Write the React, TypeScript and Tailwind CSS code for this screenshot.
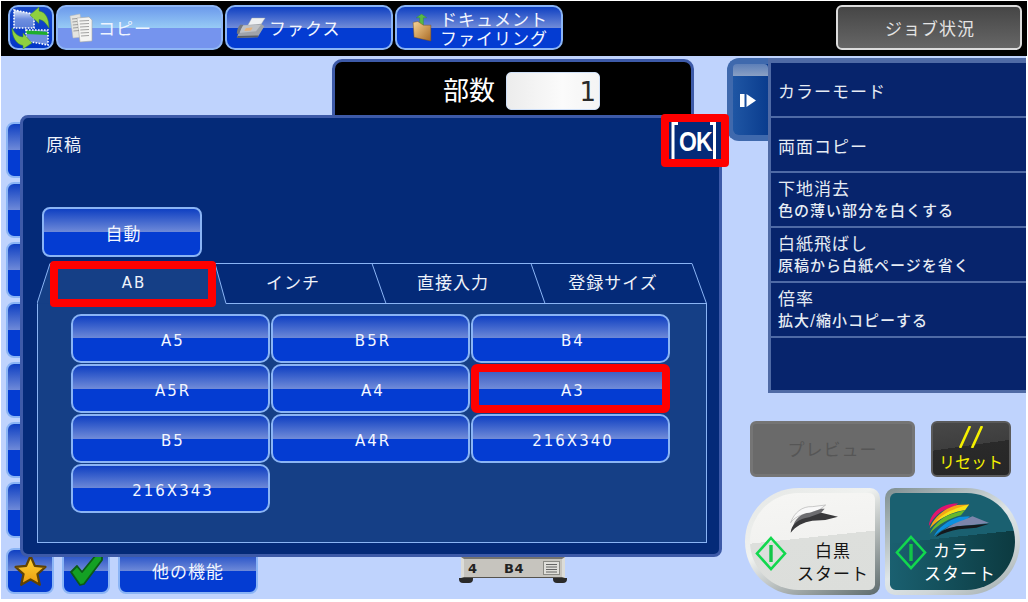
import React from "react";

const gloss =
  "bg-[linear-gradient(#0f40c2_0%,#6f8ad8_50%,#043cd2_50%,#043cd2_100%)] border-2 border-[#8ab4f5] text-[#f2f6ff]";
const jp = "text-[17px] tracking-[1px] leading-none";
const jpc = "text-[17px] tracking-[1px] leading-none pt-[4px]";
const latin = "text-[15px] tracking-[2px] leading-none";
const sub = "text-[15px] font-medium leading-none tracking-[1px]";
const row = "flex h-[53px] items-center bg-[#07246c] pl-[7px]";
const row2 = "flex h-[53px] flex-col justify-center gap-[6px] bg-[#07246c] pl-[7px] pt-[1px]";

function Side() {
  return <div className={`${gloss} h-[56px] w-[40px] rounded-[8px]`} />;
}

function SwapIcon() {
  return (
    <svg width="42" height="42" viewBox="0 0 42 42">
      <defs>
        <linearGradient id="fr" x1="0" y1="0" x2="0" y2="1">
          <stop offset="0" stopColor="#dfe9fb" />
          <stop offset="0.5" stopColor="#6f8fe0" />
          <stop offset="1" stopColor="#5a7ed8" />
        </linearGradient>
      </defs>
      <path d="M4 3 L24 7 L24 21 L4 21 Z" fill="url(#fr)" />
      <path d="M4 3 L24 7 L24 21 L4 21 Z" fill="none" stroke="#fff" strokeWidth="1.6" strokeDasharray="1.6 1.4" />
      <path d="M16 23 H38 V38 L16 34 Z" fill="#6d8ee0" />
      <path d="M16 23 L38 25 L38 28 L16 27 Z" fill="#1fae2c" />
      <path d="M16 23 H38 V38 L16 34 Z" fill="none" stroke="#fff" strokeWidth="1.6" strokeDasharray="1.6 1.4" />
      <path d="M20 8 L29 0 L29 4 C36 5 39 12 39 21 C36 16 33 13 29 12.5 L29 16.5 Z" fill="#8fd040" stroke="#3f8f2a" strokeWidth="0.5" />
      <path d="M22 36 L13 42 L13 38.5 C6 37 2 30 2 21 C5 27 8 29.5 13 30 L13 26 Z" fill="#8fd040" stroke="#3f8f2a" strokeWidth="0.5" />
    </svg>
  );
}

function CopyIcon() {
  return (
    <svg width="24" height="30" viewBox="0 0 24 30">
      <path d="M1 3 L11 1 L14 24 L4 25 Z" fill="#e4e4e0" stroke="#b8b8b4" strokeWidth="0.5" />
      <path d="M8 5 L20 4 L23 7 L23 28 L11 29 Z" fill="#f4f4f2" stroke="#a8a8a4" strokeWidth="0.6" />
      <g stroke="#8b8b8b" strokeWidth="0.8">
        <path d="M3 6 L8 5.5 M3.4 9 L8 8.5 M3.8 12 L9 11.5 M4 15 L9 14.5 M4.4 18 L10 17.5" />
        <path d="M10.5 8 L20 7.5 M10.8 11 L20 10.5 M11 14 L20 13.5 M11.3 17 L20 16.5 M11.6 20 L20 19.5 M12 23 L20 22.5" />
      </g>
    </svg>
  );
}

function FaxIcon() {
  return (
    <svg width="30" height="22" viewBox="0 0 36 26" className="shrink-0">
      <path d="M14 10 L19 1 L35 1 L28 12 Z" fill="#eef0f2" stroke="#9aa0a8" strokeWidth="0.5" />
      <path d="M6 10 L30 8 L34 11 L26 24 L1 25 Z" fill="#a0a4aa" />
      <path d="M8 10 L30 9 L24 17 L3 19 Z" fill="#bfc2c6" />
      <path d="M12 13 L20 12.5 L18 16 L10 16.5 Z" fill="#e6b27a" />
      <path d="M1 25 L26 24 L27 22 L2 22.5 Z" fill="#5a5e65" />
      <path d="M5 9 C2 12 1 16 1 20 L4 20 C5 16 7 12 9 9 Z" fill="#74787f" />
    </svg>
  );
}

function FolderIcon() {
  return (
    <svg width="20" height="28" viewBox="0 0 21 30" className="shrink-0">
      <defs>
        <linearGradient id="fd" x1="0" y1="0" x2="1" y2="1">
          <stop offset="0" stopColor="#f9d596" />
          <stop offset="1" stopColor="#a86a25" />
        </linearGradient>
      </defs>
      <path d="M8 9 L8 4 L4.5 4 L10 0 L15.5 4 L12 4 L12 12 L8 12 Z" fill="#58b946" stroke="#2f8a2c" strokeWidth="0.4" />
      <path d="M1 9 L6 8 L12 12 L20 12 L20 29 L2 25 Z" fill="url(#fd)" stroke="#7d4f18" strokeWidth="0.5" />
    </svg>
  );
}

function Diamond() {
  return (
    <svg width="32" height="35" viewBox="0 0 32 35" className="shrink-0">
      <path d="M16 2 L30 17.5 L16 33 L2 17.5 Z" fill="none" stroke="#12d84e" strokeWidth="2.6" />
      <path d="M16 9 V26" stroke="#12c648" strokeWidth="3.4" />
    </svg>
  );
}

function MonoBird() {
  return (
    <svg width="50" height="29" viewBox="135 45 150 85">
      <path d="M140 100 C150 70 175 50 205 52 L245 47 L225 62 L195 72 C170 75 150 85 140 100Z" fill="#f8f8f8" stroke="#9a9a9a" strokeWidth="1.5" />
      <path d="M146 116 C150 90 172 70 198 70 L232 58 L242 58 L228 74 L205 84 C180 88 160 98 146 116Z" fill="#6d6d70" />
      <path d="M140 130 C142 105 165 88 195 84 L232 70 L282 82 L244 92 L205 94 C178 98 155 110 140 130Z" fill="#38383a" />
    </svg>
  );
}

function ColorBird() {
  return (
    <svg width="62" height="34" viewBox="130 40 160 88">
      <path d="M132 100 C135 65 165 40 208 41 L192 52 C165 56 145 75 132 100Z" fill="#e2146e" />
      <path d="M134 106 C145 78 170 54 205 45 L236 44 L222 56 C195 60 160 78 134 106Z" fill="#f6a416" />
      <path d="M150 88 C168 68 190 56 236 44 L226 58 C200 62 175 72 150 88Z" fill="#f5e21a" />
      <path d="M134 120 C145 95 170 72 200 66 L226 58 L215 72 C190 78 155 95 134 120Z" fill="#67b82c" />
      <path d="M145 126 C155 105 180 85 210 76 L238 74 L225 88 C200 90 170 105 145 126Z" fill="#0c8fe0" />
      <path d="M162 122 C175 105 195 92 222 84 L245 74 L288 92 L250 96 L205 100 C188 104 175 112 162 122Z" fill="#7c86ab" />
      <path d="M150 128 C160 112 180 104 205 100 L250 97 L288 94 L255 104 L210 108 C188 112 170 118 150 128Z" fill="#14181c" />
    </svg>
  );
}

function OkMark() {
  return (
    <svg width="52" height="37" viewBox="0 0 52 37" className="absolute left-0 top-0">
      <path d="M9 1.5 H4 V37 M41 1.5 H45.5 V37" fill="none" stroke="#fff" strokeWidth="3" />
    </svg>
  );
}

function Star() {
  return (
    <svg width="33" height="33" viewBox="0 0 32 32">
      <defs>
        <linearGradient id="st" x1="0" y1="0" x2="0" y2="1">
          <stop offset="0" stopColor="#ffd83a" />
          <stop offset="1" stopColor="#eb9a0c" />
        </linearGradient>
      </defs>
      <path d="M16 2 L20.2 11.5 L30.5 12.6 L22.8 19.6 L25 29.8 L16 24.6 L7 29.8 L9.2 19.6 L1.5 12.6 L11.8 11.5 Z" fill="url(#st)" stroke="#5f4205" strokeWidth="2.2" strokeLinejoin="round" />
    </svg>
  );
}

function Check() {
  return (
    <svg width="34" height="32" viewBox="0 0 34 32">
      <path d="M2 18 L8 12 L13 18 L27 1 L33 1 L33 6 L15 30 L11 31 Z" fill="#14a024" stroke="#0b5a16" strokeWidth="1.8" strokeLinejoin="round" />
    </svg>
  );
}

function TabLines() {
  return (
    <svg width="670" height="41" viewBox="0 0 670 41" className="absolute left-0 top-0" fill="none">
      <path d="M0 40.5 L13 0.5 H178 L189 40.5 Z" fill="#153f86" />
      <path
        d="M0 40.5 L13 0.5 H655 L669.5 40.5 H189 L178 0.5 M335 0.5 L349 40.5 M494 0.5 L508 40.5"
        stroke="#8ab4f5"
        strokeWidth="1"
      />
    </svg>
  );
}

export default function App() {
  const sizes = ["A5", "B5R", "B4", "A5R", "A4", "A3", "B5", "A4R", "216X340", "216X343"];
  return (
    <div className="flex h-[602px] w-[1028px] flex-col bg-white pl-px pt-px pr-px [font-family:'DejaVu_Sans','Noto_Sans_CJK_JP',sans-serif]">
      {/* top bar */}
      <div className="flex h-[55px] w-[1026px] items-start bg-black pl-[7px] pr-[5px] pt-[4px]">
        <div className="flex h-[45px] w-[46px] items-center justify-center rounded-[10px] border-2 border-[#8ab4f5] bg-[linear-gradient(#1748c8,#0336c8)]">
          <SwapIcon />
        </div>
        <div className="ml-[2px] flex h-[45px] w-[167px] items-center rounded-[10px] border-2 border-[#8fb6f5] bg-[linear-gradient(#6c9aec_0%,#96caf5_50%,#7594ee_50%,#7594ee_100%)] pl-[11px] text-[#eef4ff]">
          <CopyIcon />
          <span className={`${jpc} ml-[5px]`}>コピー</span>
        </div>
        <div className={`${gloss} ml-[2px] flex h-[45px] w-[168px] items-center rounded-[10px] pl-[9px]`}>
          <FaxIcon />
          <span className={`${jpc} ml-[3px]`}>ファクス</span>
        </div>
        <div className={`${gloss} ml-[2px] flex h-[45px] w-[168px] items-center rounded-[10px] pl-[15px]`}>
          <FolderIcon />
          <div className="ml-[8px] flex flex-col gap-[2px] pt-[4px] text-center">
            <span className={jp}>ドキュメント</span>
            <span className={jp}>ファイリング</span>
          </div>
        </div>
        <div className="ml-auto flex h-[45px] w-[186px] items-center justify-center rounded-[6px] border-2 border-[#dcdcdc] bg-[linear-gradient(#464646,#666666)] pl-[2px] text-[#e4e4e4]">
          <span className={jpc}>ジョブ状況</span>
        </div>
      </div>

      {/* main area */}
      <div className="relative flex h-[543px] w-[1025px] bg-[#bfd3fd]">
        <div className="flex w-[331px] flex-col pl-[5px] pt-[66px]">
          <div className="flex flex-col gap-[4px]">
            <Side />
            <Side />
            <Side />
            <Side />
            <Side />
            <Side />
            <Side />
          </div>
          <div className="mt-[10px] flex gap-[8px]">
            <div className={`${gloss} flex h-[46px] w-[48px] items-center justify-center rounded-[8px] pb-[2px]`}>
              <Star />
            </div>
            <div className={`${gloss} flex h-[46px] w-[48px] items-center justify-center rounded-[8px] pb-[2px]`}>
              <Check />
            </div>
            <div className={`${gloss} flex h-[46px] w-[140px] items-center justify-center rounded-[8px] pt-[2px]`}>
              <span className={jp}>他の機能</span>
            </div>
          </div>
        </div>

        <div className="flex w-[362px] flex-col pt-[3px]">
          <div className="flex h-[64px] items-start rounded-t-[10px] border-[3px] border-[#3d5aa8] bg-black pl-[108px] pt-[10px] text-white">
            <span className="mt-[6px] text-[26px] leading-none">部数</span>
            <div className="ml-[11px] flex h-[38px] w-[94px] items-center justify-end rounded-[5px] border border-[#cfe0f8] bg-[linear-gradient(90deg,#ececec,#fbfbfb_60%,#f4f4f4)] pr-[3px] pt-[2px] text-[26px] leading-none text-[#2a2a2a]">
              1
            </div>
          </div>
          <div className="mt-auto mb-[16px] ml-[127px] flex h-[26px] w-[108px] flex-col">
            <div className="mx-[2px] flex h-[21px] items-center border-x-[3px] border-t-2 border-b border-x-[#dcdcd8] border-t-[#77756f] border-b-[#55534e] bg-[#c6c4be] pl-[4px] text-[13px] font-bold leading-none tracking-[0.5px] text-[#222]">
              <span className="w-[36px]">4</span>
              <span className="w-[39px]">B4</span>
              <svg width="17" height="14" viewBox="0 0 17 14">
                <rect x="0.5" y="0.5" width="16" height="13" fill="#e0dfda" stroke="#8a8a84" />
                <path d="M3 3.5 H14 M3 6 H14 M3 8.5 H14 M3 11 H14" stroke="#444" strokeWidth="0.8" />
              </svg>
            </div>
            <div className="flex justify-between">
              <div className="h-[5px] w-[14px] rounded-b-[4px] bg-[#2a2a2a]" />
              <div className="h-[5px] w-[14px] rounded-b-[4px] bg-[#2a2a2a]" />
            </div>
          </div>
        </div>

        <div className="ml-[33px] flex w-[299px] flex-col pt-[2px]">
          <div className="flex items-start">
            <div className="h-[83px] w-[41px] rounded-l-[12px] border-[6px] border-r-0 border-[#3f69ad] bg-[linear-gradient(90deg,#1f56a4,#0a3c8e)]">
              <div className="h-[12px] w-full rounded-t-[4px] bg-[linear-gradient(#5d7fb8,#8aa0c4)]" />
              <svg width="16" height="13" viewBox="0 0 16 13" className="ml-[7px] mt-[18px]">
                <rect x="0" y="0" width="4.5" height="13" fill="#fff" />
                <path d="M6.5 0 L16 6.5 L6.5 13 Z" fill="#fff" />
              </svg>
            </div>
            <div className="flex h-[335px] w-[258px] flex-col gap-[2px] border-l-[3px] border-t-[5px] border-[#4f6aa5] bg-[#4f6aa5] text-[#e6ecf4]">
              <div className={row}>
                <span className={`${jp} pt-[6px]`}>カラーモード</span>
              </div>
              <div className={row}>
                <span className={`${jp} pt-[6px]`}>両面コピー</span>
              </div>
              <div className={row2}>
                <span className={jp}>下地消去</span>
                <span className={sub}>色の薄い部分を白くする</span>
              </div>
              <div className={row2}>
                <span className={jp}>白紙飛ばし</span>
                <span className={sub}>原稿から白紙ページを省く</span>
              </div>
              <div className={row2}>
                <span className={jp}>倍率</span>
                <span className={sub}>拡大/縮小コピーする</span>
              </div>
              <div className="h-[52px] bg-[#07246c]" />
            </div>
          </div>

          <div className="ml-[23px] mt-[28px] flex items-center gap-[16px]">
            <div className="flex h-[56px] w-[165px] items-center justify-center rounded-[6px] border-[3px] border-[#757575] bg-[#6a6a6a] pt-[2px] text-[#565656]">
              <span className={jp}>プレビュー</span>
            </div>
            <div className="flex h-[56px] w-[80px] flex-col items-center rounded-[6px] border-2 border-[#5a5a5a] bg-[linear-gradient(172deg,#484848_0%,#3e3e3e_44%,#2a2a2a_44%,#262626_100%)] pt-[3px] text-[#f5f000]">
              <svg width="24" height="22" viewBox="0 0 24 22">
                <path d="M11 0 L1 22 M23 0 L13 22" stroke="#f5f000" strokeWidth="2.6" />
              </svg>
              <span className="mt-[7px] text-[16px] leading-none">リセット</span>
            </div>
          </div>

          <div className="ml-[18px] mt-[11px] flex gap-[5px]">
            <div className="h-[107px] w-[135px] rounded-l-[54px] rounded-r-[10px] bg-[linear-gradient(150deg,#e4e6e4_0%,#f0f2f0_40%,#9aa2a2_75%,#5c6a6c_100%)] p-[5px]">
              <div className="flex h-full flex-col items-center rounded-l-[50px] rounded-r-[6px] bg-[linear-gradient(174deg,#f6f6f4_0%,#f2f2f0_46%,#dddfdc_46%,#dcdedb_100%)] pt-[11px] text-[#151515]">
                <div className="ml-[2px]"><MonoBird /></div>
                <div className="mt-[3px] flex w-full items-start pl-[5px]">
                  <Diamond />
                  <div className="ml-[10px] mt-[7px] flex flex-col items-center gap-[6px]">
                    <span className={jp}>白黒</span>
                    <span className={jp}>スタート</span>
                  </div>
                </div>
              </div>
            </div>
            <div className="h-[107px] w-[135px] rounded-l-[10px] rounded-r-[54px] bg-[linear-gradient(150deg,#7e8e90_0%,#dfe6e8_50%,#cfd6d8_70%,#9aa6a8_100%)] p-[5px]">
              <div className="flex h-full flex-col items-center rounded-l-[6px] rounded-r-[50px] bg-[linear-gradient(174deg,#1a6070_46%,transparent_46%),linear-gradient(90deg,#1a6070,#0c3a40)] pt-[10px] text-white">
                <div className="mb-[-2px] ml-[12px]"><ColorBird /></div>
                <div className="flex w-full items-start pl-[5px]">
                  <Diamond />
                  <div className="ml-[-3px] mt-[8px] flex flex-col items-center gap-[6px]">
                    <span className={jp}>カラー</span>
                    <span className={jp}>スタート</span>
                  </div>
                </div>
              </div>
            </div>
          </div>
        </div>

        {/* modal */}
        <div className="absolute left-[19px] top-[59px] flex h-[442px] w-[702px] flex-col rounded-[8px] border-[3px] border-[#3d5aa8] bg-[#042a78] text-[#eef2fa]">
          <div className="pl-[23px] pt-[16px]">
            <span className={jp}>原稿</span>
          </div>
          <div className={`${gloss} ml-[19px] mt-[49px] flex h-[50px] w-[160px] items-center justify-center rounded-[8px] pl-[3px]`}>
            <span className={jpc}>自動</span>
          </div>
          <div className="relative ml-[14px] mt-[6px] flex h-[40px] w-[670px] pl-[16px]">
            <TabLines />
            <div className="relative flex w-[160px] items-center justify-center pl-[2px]">
              <span className={latin}>AB</span>
              <div className="absolute -bottom-[4px] -left-[3px] -right-[3px] -top-[2px] rounded-[4px] border-8 border-[#ff0000]" />
            </div>
            <div className="relative flex w-[160px] items-center justify-center"><span className={jp}>インチ</span></div>
            <div className="relative flex w-[160px] items-center justify-center"><span className={jp}>直接入力</span></div>
            <div className="relative flex w-[160px] items-center justify-center"><span className={jp}>登録サイズ</span></div>
          </div>
          <div className="ml-[14px] h-[240px] w-[670px] border-x border-b border-[#8ab4f5] bg-[#153f86] pl-[33px] pt-[11px]">
            <div className="grid grid-cols-[199px_199px_199px] gap-[1px]">
              {sizes.map((s) =>
                s === "A3" ? (
                  <div
                    key={s}
                    className="flex h-[49px] items-center justify-center rounded-[6px] border-8 border-[#ff0000] bg-[linear-gradient(#3f60c4_0%,#6f8ad8_50%,#043cd2_50%,#043cd2_100%)] pl-[5px] pt-[6px] text-[#f2f6ff]"
                  >
                    <span className={latin}>{s}</span>
                  </div>
                ) : (
                  <div key={s} className={`${gloss} flex h-[49px] items-center justify-center rounded-[10px] pl-[5px] pt-[6px]`}>
                    <span className={latin}>{s}</span>
                  </div>
                )
              )}
            </div>
          </div>
          {/* OK */}
          <div className="absolute -right-[10px] -top-[4px] h-[53px] w-[68px] rounded-[4px] border-8 border-[#ff0000] bg-[#042a78]">
            <div className="relative flex h-[37px] w-[52px] items-center justify-center pl-[1px] pt-[3px] text-[27px] font-bold leading-none tracking-[-1px] text-white [font-family:'Liberation_Sans',sans-serif]">
              <OkMark />
              <span className="scale-x-[0.85]">OK</span>
            </div>
          </div>
        </div>
      </div>
      <div className="flex-1" />
    </div>
  );
}
